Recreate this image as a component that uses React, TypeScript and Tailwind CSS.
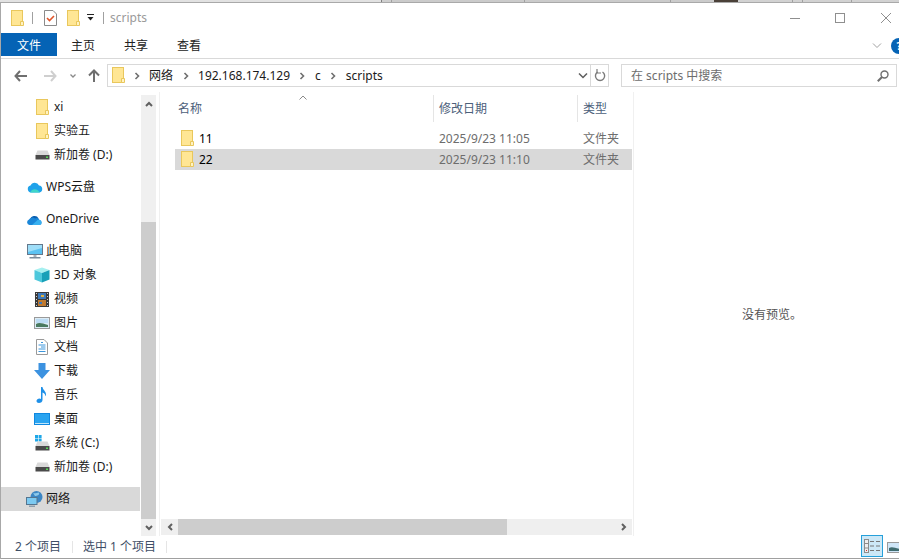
import React from 'react';

const Folder = ({ className = '' }: { className?: string }) => (
  <svg width="13" height="17" viewBox="0 0 13 17" className={className}>
    <rect x="0.5" y="0.5" width="11" height="15" fill="#ffe694" stroke="#e9c75c" />
    <path d="M9.5 15.5 V11.5 H12.5 V15.5 Z" fill="#fff3c4" stroke="#e9c75c" />
  </svg>
);

const Drive = () => (
  <svg width="15" height="10" viewBox="0 0 15 10">
    <path d="M2.5 0.5 H12.5 L14.5 5 H0.5 Z" fill="#d9d9d9" />
    <rect x="0.5" y="5" width="14" height="4.5" fill="#4a4a4a" />
    <rect x="11" y="6.5" width="2" height="1.5" fill="#55d855" />
  </svg>
);

const WpsCloud = () => (
  <svg width="16" height="12" viewBox="0 0 16 12">
    <path d="M4 11.5 A3.5 3.5 0 0 1 3.5 4.6 A4.6 4.6 0 0 1 12 4.4 A3.6 3.6 0 0 1 12.4 11.5 Z" fill="#1fa2ea" />
    <path d="M3 11.5 C5 7 10 7 13 11.5 Z" fill="#3fd6c8" />
  </svg>
);

const OneDrive = () => (
  <svg width="17" height="11" viewBox="0 0 17 11">
    <path d="M4 6 A4.6 4.6 0 0 1 12.6 4.4 L8 8 Z" fill="#0a5fb0" />
    <path d="M3.6 11 A2.9 2.9 0 0 1 3 5.4 A4 4 0 0 1 9 4.6 A3.5 3.5 0 0 1 13.6 6 A2.6 2.6 0 0 1 13.8 11 Z" fill="#1a86d8" />
    <path d="M6 11 L10.5 7 A3 3 0 0 1 13.6 6 A2.6 2.6 0 0 1 13.8 11 Z" fill="#38b0f0" />
  </svg>
);

const Monitor = () => (
  <svg width="16" height="15" viewBox="0 0 16 15">
    <rect x="0.5" y="0.5" width="15" height="10" fill="#5cc2f2" stroke="#64788c" />
    <path d="M1 1 H15 V4 L1 8 Z" fill="#9fdef8" />
    <rect x="6.5" y="11" width="3" height="2" fill="#a8b4be" />
    <rect x="2.5" y="13" width="11" height="1.5" fill="#7b8c9c" />
  </svg>
);

const Cube = () => (
  <svg width="16" height="16" viewBox="0 0 16 16">
    <path d="M8 0.5 L15.5 3 L8 6 L0.5 3 Z" fill="#a6f0f0" />
    <path d="M0.5 3 L8 6 V15.5 L0.5 12.5 Z" fill="#4dc8dc" />
    <path d="M15.5 3 L8 6 V15.5 L15.5 12.5 Z" fill="#18a0b8" />
  </svg>
);

const Film = () => (
  <svg width="14" height="15" viewBox="0 0 14 15">
    <rect width="14" height="15" fill="#3a3a3a" />
    <rect x="3" y="1" width="8" height="6" fill="#3d78b8" />
    <rect x="3" y="8" width="8" height="6" fill="#c07a30" />
    <rect x="6" y="3" width="3" height="2" fill="#e0b040" />
    <rect x="4" y="10" width="3" height="2" fill="#3d78b8" />
    <path d="M1 1.5 H2 M1 4.5 H2 M1 7.5 H2 M1 10.5 H2 M1 13.5 H2 M12 1.5 H13 M12 4.5 H13 M12 7.5 H13 M12 10.5 H13 M12 13.5 H13" stroke="#d0d0d0" />
  </svg>
);

const Picture = () => (
  <svg width="16" height="12" viewBox="0 0 16 12">
    <rect x="0.5" y="0.5" width="15" height="11" fill="#dcecf6" stroke="#9a9a9a" />
    <path d="M2 2 H14 V6 H2 Z" fill="#bcdcf4" />
    <path d="M2 7 C5 5 8 6 14 8 V10 H2 Z" fill="#4a7a60" />
  </svg>
);

const Doc = () => (
  <svg width="12" height="16" viewBox="0 0 12 16">
    <path d="M0.5 0.5 H8 L11.5 4 V15.5 H0.5 Z" fill="#ffffff" stroke="#9a9a9a" />
    <path d="M5 3.5 H7 M2.5 6 H9.5 M5 8 H9.5 M2.5 10 H9.5 M2.5 12.5 H9.5" stroke="#3c96dc" />
  </svg>
);

const Download = () => (
  <svg width="16" height="16" viewBox="0 0 16 16">
    <path d="M4.5 0 H11.5 V7 H16 L8 16 L0 7 H4.5 Z" fill="#3c92e0" />
  </svg>
);

const Music = () => (
  <svg width="12" height="16" viewBox="0 0 12 16">
    <path d="M5 0 H6.5 C6.8 3 10 4 10 7.5 C10 8.5 9.6 9 9.4 9.3 C9.4 7 8 6 6.5 5.6 V13 C6.5 15 4.8 16 3 16 C1.5 16 0.5 15.2 0.5 14 C0.5 12.5 2 11.6 3.4 11.6 C4 11.6 4.6 11.8 5 12 Z" fill="#1e90e8" />
  </svg>
);

const Desktop = () => (
  <svg width="16" height="12" viewBox="0 0 16 12">
    <rect width="16" height="12" fill="#0f88e0" />
    <rect x="1" y="1" width="14" height="9" fill="#2aa4f0" />
    <rect x="1" y="10" width="14" height="1" fill="#bfe6fb" />
  </svg>
);

const SystemDrive = () => (
  <svg width="15" height="16" viewBox="0 0 15 16">
    <path d="M0 0 H3 V3 H0 Z M3.6 0 H6.6 V3 H3.6 Z M0 3.6 H3 V6.6 H0 Z M3.6 3.6 H6.6 V6.6 H3.6 Z" fill="#1ea7e8" />
    <path d="M2.5 6.5 H12.5 L14.5 11 H0.5 Z" fill="#d9d9d9" />
    <rect x="0.5" y="11" width="14" height="4.5" fill="#4a4a4a" />
    <rect x="11" y="12.5" width="2" height="1.5" fill="#55d855" />
  </svg>
);

const Network = () => (
  <svg width="17" height="16" viewBox="0 0 17 16">
    <circle cx="10.5" cy="6" r="6" fill="#3c86c4" />
    <path d="M7 2 C9 3 11 1.5 13 1.5 C14 4 11 5 9 5 Z" fill="#8cc8ea" />
    <rect x="0.5" y="6.5" width="10.5" height="7" fill="#7ccaf2" stroke="#55758f" />
    <rect x="3" y="14.5" width="6" height="1.5" fill="#8ea0ae" />
  </svg>
);

const Chevron = () => (
  <svg width="6" height="8" viewBox="0 0 6 8">
    <path d="M1.5 1 L4.5 4 L1.5 7" fill="none" stroke="#6f6f6f" strokeWidth="1.6" />
  </svg>
);

const NavRow = ({ icon, label, child, selected }: { icon: React.ReactNode; label: string; child?: boolean; selected?: boolean }) => (
  <div className={`flex h-6 items-center ${selected ? 'mr-px bg-[#d9d9d9]' : ''} ${child ? 'pl-[33px]' : 'pl-[25px]'}`}>
    <span className={`flex h-4 items-center justify-center ${child ? 'w-[16px]' : 'w-[17px]'}`}>{icon}</span>
    <span className={`whitespace-nowrap text-[#1a1a1a] ${child ? 'ml-[4px]' : 'ml-[3px]'}`}>{label}</span>
  </div>
);

const FileRow = ({ name, date, selected }: { name: string; date: string; selected?: boolean }) => (
  <div className={`flex h-[21px] items-center ${selected ? 'bg-[#d9d9d9]' : ''}`}>
    <div className="flex w-[258px] items-center pl-[6px]">
      <Folder />
      <span className="ml-[5px] text-black">{name}</span>
    </div>
    <div className="w-[144px] pl-[6px] text-[#6d6d6d]">{date}</div>
    <div className="pl-[6px] text-[#6d6d6d]">文件夹</div>
  </div>
);

export default function App() {
  return (
    <div className="relative flex h-[559px] w-[899px] flex-col overflow-hidden bg-white text-[12px] leading-4 [font-family:'Noto_Sans','Noto_Sans_CJK_SC',sans-serif]">
      {/* desktop peeking out above the window */}
      <div className="flex h-[3px] shrink-0 border-b border-[#a9a9a9]">
        <div className="w-[381px] bg-[#e2e2e2]" />
        <div className="w-px bg-[#7f7f7f]" />
        <div className="w-[9px] bg-[#cfcfcf]" />
        <div className="w-px bg-[#a0a0a0]" />
        <div className="w-[132px] bg-[#cbcbcb]" />
        <div className="w-px bg-[#a0a0a0]" />
        <div className="w-[145px] bg-[#cbcbcb]" />
        <div className="w-px bg-[#a0a0a0]" />
        <div className="w-[43px] bg-[#cbcbcb]" />
        <div className="w-[24px] bg-[#4a4038]" />
        <div className="w-[54px] bg-[#d2d2d2]" />
        <div className="w-px bg-[#a0a0a0]" />
        <div className="w-[9px] bg-[#d2d2d2]" />
        <div className="w-px bg-[#a0a0a0]" />
        <div className="w-[48px] bg-[#d2d2d2]" />
        <div className="w-px bg-[#a0a0a0]" />
        <div className="flex-1 bg-[#d2d2d2]" />
      </div>

      <div className="flex min-h-0 flex-1 flex-col border-l border-[#a8a8a8]">
        {/* title bar */}
        <div className="flex h-[30px] shrink-0 items-center pl-[10px]">
          <Folder />
          <div className="ml-[8px] h-3 w-px bg-[#a0a0a0]" />
          <svg width="13" height="16" viewBox="0 0 13 16" className="ml-[11px]">
            <path d="M0.5 0.5 H9 L12.5 4 V15.5 H0.5 Z" fill="#fff" stroke="#8a8a8a" />
            <path d="M3 8 L5.5 10.5 L10 6" fill="none" stroke="#e0552a" strokeWidth="1.6" />
          </svg>
          <Folder className="ml-[10px]" />
          <svg width="8" height="8" viewBox="0 0 8 8" className="ml-[7px]">
            <path d="M0 0.5 H7" stroke="#222" />
            <path d="M0.5 3 H6.5 L3.5 6.5 Z" fill="#222" />
          </svg>
          <div className="ml-[8px] h-3 w-px bg-[#a0a0a0]" />
          <span className="ml-[6px] text-[#9a9a9a]">scripts</span>
          <div className="ml-auto flex items-center pr-[8px]">
            <svg width="10" height="10" viewBox="0 0 10 10"><path d="M0 5.5 H10" stroke="#8f8f8f" /></svg>
            <svg width="10" height="10" viewBox="0 0 10 10" className="ml-[35px]"><rect x="0.5" y="0.5" width="9" height="9" fill="none" stroke="#8f8f8f" /></svg>
            <svg width="10" height="10" viewBox="0 0 10 10" className="ml-[36px]"><path d="M0 0 L10 10 M10 0 L0 10" stroke="#8f8f8f" /></svg>
          </div>
        </div>

        {/* ribbon tabs */}
        <div className="flex h-[26px] shrink-0 items-start border-b border-[#d9d9d9]">
          <div className="flex h-[23px] w-[56px] items-center justify-center bg-[#0563b5] pt-[3px] text-white">文件</div>
          <div className="ml-[14px] flex h-[23px] w-[24px] items-center justify-center pt-[3px] text-[#222]">主页</div>
          <div className="ml-[29px] flex h-[23px] w-[24px] items-center justify-center pt-[3px] text-[#222]">共享</div>
          <div className="ml-[29px] flex h-[23px] w-[24px] items-center justify-center pt-[3px] text-[#222]">查看</div>
          <div className="ml-auto flex h-[23px] items-center pt-[2px]">
            <svg width="10" height="6" viewBox="0 0 10 6"><path d="M1 0.5 L5 4.5 L9 0.5" fill="none" stroke="#a0a0a0" /></svg>
          </div>
          <div className="mr-[-8px] ml-[9px] mt-[5px] flex h-4 w-4 items-center justify-center rounded-full bg-[#0563b5] text-[11px] font-bold text-white">?</div>
        </div>

        {/* address toolbar */}
        <div className="flex h-[33px] shrink-0 items-center pl-[13px] pr-[2px]">
          <svg width="13" height="12" viewBox="0 0 13 12"><path d="M6 1 L1.5 6 L6 11 M2 6 H13" fill="none" stroke="#6f6f6f" strokeWidth="2" /></svg>
          <svg width="13" height="12" viewBox="0 0 13 12" className="ml-[17px]"><path d="M7 1 L11.5 6 L7 11 M11 6 H0" fill="none" stroke="#cfcfcf" strokeWidth="2" /></svg>
          <svg width="6" height="4" viewBox="0 0 6 4" className="ml-[13px]"><path d="M0.5 0.5 L3 3 L5.5 0.5" fill="none" stroke="#8a8a8a" strokeWidth="1.3" /></svg>
          <svg width="12" height="13" viewBox="0 0 12 13" className="ml-[12px]"><path d="M1 6.5 L6 1.5 L11 6.5 M6 2 V13" fill="none" stroke="#6f6f6f" strokeWidth="2" /></svg>
          <div className="ml-[7px] flex h-[23px] w-[502px] items-center border border-[#d9d9d9] pl-[4px]">
            <Folder />
            <span className="ml-[9px]"><Chevron /></span>
            <span className="ml-[9px] text-[#1a1a1a]">网络</span>
            <span className="ml-[10px]"><Chevron /></span>
            <span className="ml-[9px] text-[#1a1a1a]">192.168.174.129</span>
            <span className="ml-[9px]"><Chevron /></span>
            <span className="ml-[10px] text-[#1a1a1a]">c</span>
            <span className="ml-[9px]"><Chevron /></span>
            <span className="ml-[10px] text-[#1a1a1a]">scripts</span>
            <div className="ml-auto flex h-full items-center">
              <svg width="10" height="6" viewBox="0 0 10 6"><path d="M1 0.5 L5 4.5 L9 0.5" fill="none" stroke="#5f5f5f" strokeWidth="1.5" /></svg>
              <div className="ml-[2px] h-full w-px bg-[#d9d9d9]" />
              <svg width="12" height="13" viewBox="0 0 12 13" className="mx-[2px] ml-[3px]">
                <path d="M8.5 3 A4.6 4.6 0 1 1 3.6 3" fill="none" stroke="#7a7a7a" strokeWidth="1.4" />
                <path d="M3 0 V4 H7" fill="none" stroke="#7a7a7a" strokeWidth="1.2" />
              </svg>
            </div>
          </div>
          <div className="ml-[12px] flex h-[23px] w-[276px] items-center justify-between border border-[#d9d9d9] pl-[9px] pr-[7px]">
            <span className="text-[#6d6d6d]">在 scripts 中搜索</span>
            <svg width="12" height="12" viewBox="0 0 12 12">
              <circle cx="7.5" cy="4.5" r="3.5" fill="none" stroke="#6f6f6f" strokeWidth="1.4" />
              <path d="M5 7 L0.8 11.2" stroke="#6f6f6f" strokeWidth="2" />
            </svg>
          </div>
        </div>

        {/* body */}
        <div className="flex h-[444px] shrink-0">
          {/* nav pane */}
          <div className="flex w-[140px] shrink-0 flex-col pt-[3px]">
            <NavRow child icon={<Folder />} label="xi" />
            <NavRow child icon={<Folder />} label="实验五" />
            <NavRow child icon={<Drive />} label="新加卷 (D:)" />
            <div className="h-2" />
            <NavRow icon={<WpsCloud />} label="WPS云盘" />
            <div className="h-2" />
            <NavRow icon={<OneDrive />} label="OneDrive" />
            <div className="h-2" />
            <NavRow icon={<Monitor />} label="此电脑" />
            <NavRow child icon={<Cube />} label="3D 对象" />
            <NavRow child icon={<Film />} label="视频" />
            <NavRow child icon={<Picture />} label="图片" />
            <NavRow child icon={<Doc />} label="文档" />
            <NavRow child icon={<Download />} label="下载" />
            <NavRow child icon={<Music />} label="音乐" />
            <NavRow child icon={<Desktop />} label="桌面" />
            <NavRow child icon={<SystemDrive />} label="系统 (C:)" />
            <NavRow child icon={<Drive />} label="新加卷 (D:)" />
            <div className="h-2" />
            <NavRow selected icon={<Network />} label="网络" />
          </div>

          {/* nav scrollbar */}
          <div className="mt-[3px] flex w-[15px] shrink-0 flex-col bg-[#f0f0f0]">
            <div className="flex h-[17px] items-center justify-center">
              <svg width="8" height="6" viewBox="0 0 8 6"><path d="M1 5 L4 2 L7 5" fill="none" stroke="#606060" strokeWidth="2" /></svg>
            </div>
            <div className="h-[110px]" />
            <div className="flex-1 bg-[#cdcdcd]" />
            <div className="flex h-[17px] items-center justify-center">
              <svg width="8" height="6" viewBox="0 0 8 6"><path d="M1 1 L4 4 L7 1" fill="none" stroke="#606060" strokeWidth="2" /></svg>
            </div>
          </div>

          {/* file list */}
          <div className="ml-[3px] flex w-[475px] shrink-0 flex-col border-x border-[#f0f0f0]">
            <div className="relative flex h-[30px] shrink-0 pl-[15px] pt-[3px] text-[#4c607a]">
              <svg width="8" height="5" viewBox="0 0 8 5" className="absolute left-[139px] top-[3px]"><path d="M0.5 4.5 L4 1 L7.5 4.5" fill="none" stroke="#8a8a8a" /></svg>
              <div className="flex w-[258px] items-center pl-[3px]">名称</div>
              <div className="flex w-[144px] items-center border-l border-[#e5e5e5] pl-[5px]">修改日期</div>
              <div className="flex flex-1 items-center border-l border-[#e5e5e5] pl-[5px]">类型</div>
            </div>
            <div className="flex flex-1 flex-col pl-[15px] pr-[1px] pt-[6px]">
              <FileRow name="11" date="2025/9/23 11:05" />
              <FileRow selected name="22" date="2025/9/23 11:10" />
            </div>
            <div className="mx-px mb-px flex h-[16px] shrink-0 bg-[#efefef]">
              <div className="flex w-[17px] items-center justify-center">
                <svg width="6" height="8" viewBox="0 0 6 8"><path d="M5 1 L2 4 L5 7" fill="none" stroke="#606060" strokeWidth="2" /></svg>
              </div>
              <div className="w-[329px] bg-[#cdcdcd]" />
              <div className="flex flex-1 items-center justify-end pr-[5px]">
                <svg width="6" height="8" viewBox="0 0 6 8"><path d="M1 1 L4 4 L1 7" fill="none" stroke="#606060" strokeWidth="2" /></svg>
              </div>
            </div>
          </div>

          {/* preview pane */}
          <div className="flex flex-1 items-center justify-center pl-[11px] pt-[2px] text-[#555]">没有预览。</div>
        </div>

        {/* status bar */}
        <div className="flex flex-1 items-center border-b border-[#a0a0a0] pl-[14px] text-[#3e4e66]">
          <span>2 个项目</span>
          <div className="ml-[11px] h-3 w-px bg-[#e5e5e5]" />
          <span className="ml-[10px]">选中 1 个项目</span>
          <div className="ml-[10px] h-3 w-px bg-[#e5e5e5]" />
          <div className="ml-auto flex items-center">
            <div className="-mt-[2px] flex h-[22px] w-[22px] items-center justify-center border border-[#26a0da] bg-[#cce8f7]">
              <svg width="16" height="14" viewBox="0 0 16 14">
                <rect x="0.5" y="0.5" width="4" height="13" fill="#eee" stroke="#8c8c8c" />
                <path d="M0.5 4.5 H4.5 M0.5 9 H4.5" stroke="#8c8c8c" />
                <rect x="2" y="11" width="1" height="1" fill="#d03030" />
                <path d="M6 2.5 H10 M12 2.5 H16 M6 7 H10 M12 7 H16 M6 11.5 H10 M12 11.5 H16" stroke="#777" />
              </svg>
            </div>
            <svg width="12" height="11" viewBox="0 0 12 11" className="ml-[4px] shrink-0">
              <rect x="0.5" y="0.5" width="14" height="10" fill="#cfe6f8" stroke="#9a9a9a" />
              <path d="M2 6 C5 4 8 6 13 7 V9 H2 Z" fill="#3f6c70" />
            </svg>
          </div>
        </div>
      </div>
    </div>
  );
}
